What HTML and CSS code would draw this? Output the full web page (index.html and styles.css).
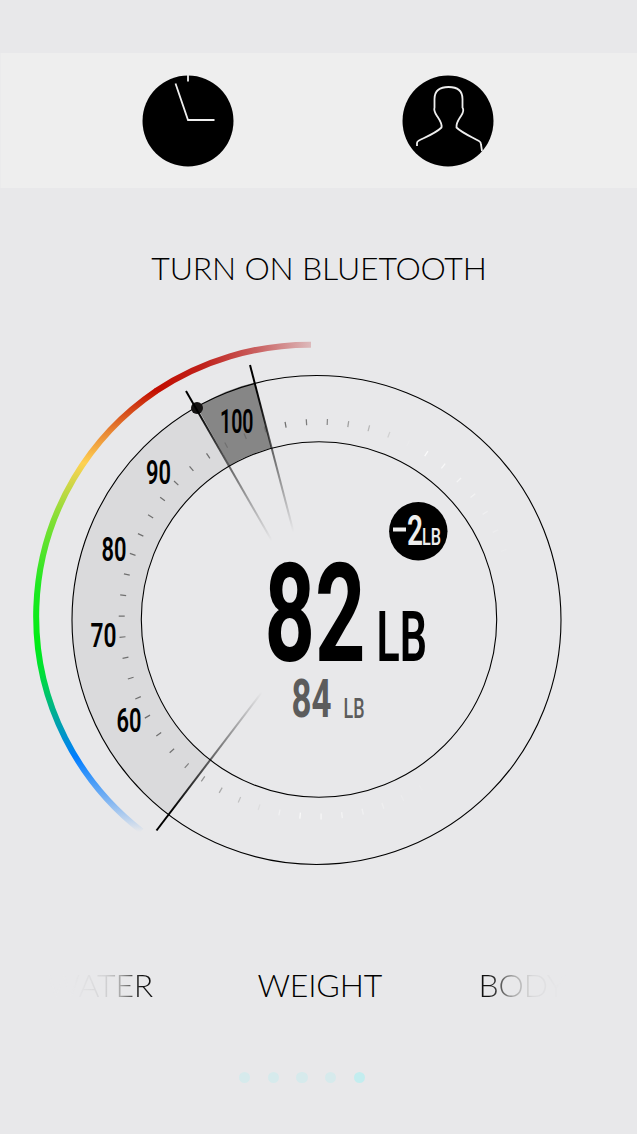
FILE: index.html
```html
<!DOCTYPE html>
<html lang="en">
<head>
<meta charset="utf-8">
<title>Scale</title>
<link rel="stylesheet" href="styles.css">
</head>
<body>
<main class="screen">
  <header class="topbar">
    <svg class="round-icon" viewBox="0 0 92 92" role="img" aria-label="History">
      <circle cx="46" cy="46" r="45.5"/>
      <path class="icon-line" d="M46 0V6.500M33.500 8.500L46 45H72.500"/>
    </svg>
    <svg class="round-icon" viewBox="0 0 92 92" role="img" aria-label="Profile">
      <circle cx="46" cy="46" r="45.500"/>
      <path class="icon-line" d="M15 71V68Q15 66.500 17 65.500C24 62 34 58 39.500 52.500C40.500 49 38 45.500 35 41C33 38 31.500 35.500 32.500 32.500V24C32.500 15.500 38 12 46.500 12S60.500 15.500 60.500 24V32.500C62.500 35.500 61 38 59 41C56 45.500 54 48 54.500 52.500C60 58 71 62.500 77 66Q79 67 79 69.500L80 76"/>
    </svg>
  </header>

  <h1 class="title">TURN ON BLUETOOTH</h1>

  <svg class="gauge" viewBox="0 330 637 560">
    <defs>
      <linearGradient id="scaleSide" gradientUnits="userSpaceOnUse" x1="0" y1="390" x2="0" y2="832">
        <stop offset="0" stop-color="#c20d00"/>
        <stop offset=".095" stop-color="#e88634"/>
        <stop offset=".165" stop-color="#ffd152"/>
        <stop offset=".29" stop-color="#84df35"/>
        <stop offset=".44" stop-color="#20e822"/>
        <stop offset=".57" stop-color="#00ec14"/>
        <stop offset=".64" stop-color="#00df38"/>
        <stop offset=".74" stop-color="#00a99d"/>
        <stop offset=".83" stop-color="#007dff"/>
        <stop offset=".92" stop-color="#72aef3"/>
        <stop offset="1" stop-color="#e8e8ea"/>
      </linearGradient>
      <linearGradient id="scaleTop" gradientUnits="userSpaceOnUse" x1="156" y1="0" x2="311" y2="0">
        <stop offset="0" stop-color="#c20d00"/>
        <stop offset=".3" stop-color="#c0211b"/>
        <stop offset=".65" stop-color="#c96060"/>
        <stop offset="1" stop-color="#ddbabc"/>
      </linearGradient>
      <linearGradient id="tickFade" gradientUnits="userSpaceOnUse" x1="0" y1="0" x2="655" y2="246">
        <stop offset=".6" stop-color="#707070"/>
        <stop offset=".66" stop-color="#909090"/>
        <stop offset=".72" stop-color="#c0c0c0"/>
        <stop offset=".765" stop-color="#e8e8ea"/>
        <stop offset=".8" stop-color="#fbfbfb"/>
        <stop offset=".97" stop-color="#e8e8ea"/>
      </linearGradient>
      <linearGradient id="handLow" gradientUnits="userSpaceOnUse" x1="156" y1="831" x2="262" y2="692">
        <stop offset="0"/><stop offset=".15"/><stop offset="1" stop-opacity="0"/>
      </linearGradient>
      <linearGradient id="handLeft" gradientUnits="userSpaceOnUse" x1="186" y1="391" x2="272" y2="541">
        <stop offset="0"/><stop offset=".12"/><stop offset="1" stop-opacity="0"/>
      </linearGradient>
      <linearGradient id="handTop" gradientUnits="userSpaceOnUse" x1="250" y1="365" x2="293.500" y2="532">
        <stop offset="0"/><stop offset=".15"/><stop offset="1" stop-opacity="0"/>
      </linearGradient>
    </defs>

    <path fill="#dadadc" d="M168.500 814.500A244.500 244.500 0 0 1 197 407L229.500 465.500A177.700 177.700 0 0 0 210.500 760Z"/>
    <path fill="#868686" d="M197 407Q225 389 255 382.500L271.500 448Q248 454 229.500 465.500Z"/>
    <circle class="ticks" cx="319" cy="619.2" r="197.300" pathLength="59"/>
    <circle class="ring" cx="316.500" cy="620" r="244.500"/>
    <circle class="ring" cx="319" cy="619.500" r="177.700"/>
    <path class="band" stroke="url(#scaleTop)" d="M156 391A276.300 273.500 0 0 1 311 344.700"/>
    <path class="band" stroke="url(#scaleSide)" d="M141.500 831A276.800 273.500 0 0 1 156.500 390.700"/>

    <circle cx="197" cy="408" r="6" fill="#151313"/>
    <path class="hand" stroke="url(#handLow)" d="M156.500 830.500L262 692"/>
    <path class="hand" stroke="url(#handLeft)" d="M186 391L272 541"/>
    <path class="hand" stroke="url(#handTop)" d="M250 365L293.500 532"/>

    <g class="num">
      <text x="220" y="432.500" font-size="33.500" textLength="33.500" lengthAdjust="spacingAndGlyphs">100</text>
      <text x="146" y="484" font-size="33.500" textLength="25" lengthAdjust="spacingAndGlyphs">90</text>
      <text x="101.500" y="560.500" font-size="33.500" textLength="25" lengthAdjust="spacingAndGlyphs">80</text>
      <text x="90.500" y="647" font-size="33.500" textLength="26" lengthAdjust="spacingAndGlyphs">70</text>
      <text x="116.500" y="731.500" font-size="33.500" textLength="25" lengthAdjust="spacingAndGlyphs">60</text>
      <text class="heavy" x="264.500" y="660.500" font-size="137" textLength="101" lengthAdjust="spacingAndGlyphs">82</text>
      <text x="376.500" y="660.500" font-size="70" textLength="50.500" lengthAdjust="spacingAndGlyphs">LB</text>
      <g class="previous">
        <text class="heavy" x="291.500" y="716.500" font-size="54" textLength="40" lengthAdjust="spacingAndGlyphs">84</text>
        <text class="thin" x="343.500" y="717.500" font-size="28" textLength="21" lengthAdjust="spacingAndGlyphs">LB</text>
      </g>
      <circle cx="418.300" cy="531.300" r="29.200"/>
      <g class="delta">
        <path d="M393 527.500h13v4h-13z"/>
        <text x="407" y="544.500" font-size="42" textLength="16" lengthAdjust="spacingAndGlyphs">2</text>
        <text class="thin" x="422" y="544.500" font-size="24.500" textLength="19" lengthAdjust="spacingAndGlyphs">LB</text>
      </g>
    </g>
  </svg>

  <nav class="tabs">
    <span class="tab tab-prev">WATER</span>
    <span class="tab">WEIGHT</span>
    <span class="tab tab-next">BODY</span>
  </nav>
  <div class="dots"><i></i><i></i><i></i><i></i><i class="on"></i></div>
</main>
</body>
</html>
```
FILE: styles.css
```css
* { box-sizing: border-box; }
body { margin: 0; background: #fff; font-family: Lato, sans-serif; color: #000; }
.screen { width: 637px; height: 1134px; padding-top: 53px; background: #e8e8ea; display: flex; flex-direction: column; overflow: hidden; }
.topbar { height: 135px; background: #eeeeee; border-left: 1px solid #ebebec; display: flex; gap: 168px; padding: 22px 0 0 141.4px; }
.round-icon { width: 92px; height: 92px; flex: none; }
.icon-line { fill: none; stroke: #eee; stroke-width: 1.8; }
.title { margin: 60px 0 0; height: 40px; line-height: 40px; padding-left: 1px; text-align: center; font-size: 32px; font-weight: 300; letter-spacing: -.2px; white-space: nowrap; }
.gauge { display: block; width: 637px; height: 560px; margin-top: 42px; flex: none; }
.ring { fill: none; stroke: #000; stroke-width: 1.1; }
.band { fill: none; stroke-width: 6; }
.hand { fill: none; stroke-width: 2; }
.ticks { fill: none; stroke: url(#tickFade); stroke-width: 6; stroke-dasharray: .06 .94; stroke-dashoffset: -.62; }
.num text { font-family: Roboto, sans-serif; font-weight: 600; }
.num .heavy { font-weight: 700; }
.num .thin { font-weight: 500; }
.previous { fill: #5c5c5c; }
.delta { fill: #eeeeee; }
.tabs { display: grid; grid-template-columns: 153px 1fr 158.5px; height: 40px; line-height: 40px; margin-top: 75px; font-size: 32px; font-weight: 300; letter-spacing: -.2px; }
.tab { text-align: center; white-space: nowrap; padding-left: 8px; }
.tab-prev { padding: 0; text-align: right; color: transparent; background: linear-gradient(90deg, #e8e8ea 72px, #d4d4d6 105px, #aaa 120px, #111 142px); background-clip: text; }
.tab-next { padding: 0; text-align: left; color: transparent; background: linear-gradient(90deg, #111 10px, #aaa 35px, #dadadc 54px, #e8e8ea 82px); background-clip: text; }
.dots { display: flex; gap: 17.5px; margin: 67px 0 0 239px; }
.dots i { width: 11.2px; height: 11.2px; border-radius: 50%; background: #d6eaec; }
.dots .on { background: #c3edef; }
```
